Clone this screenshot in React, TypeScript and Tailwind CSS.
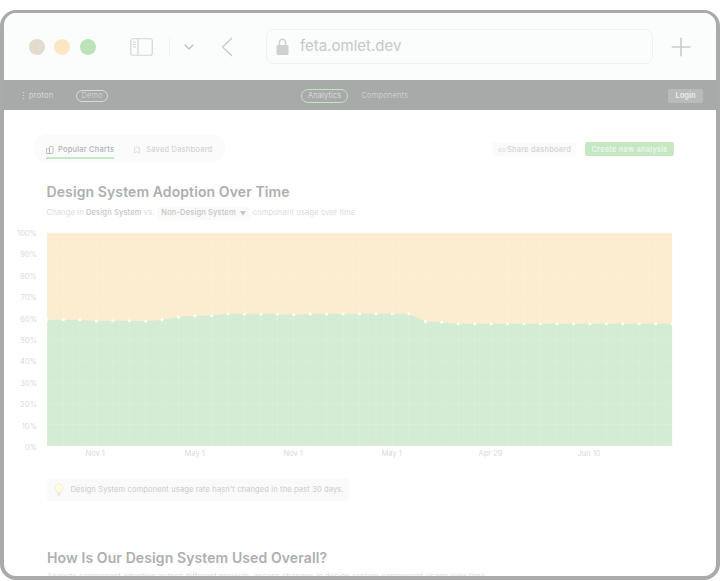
import { Bookmark, ChevronDown, Link2, Plus } from "lucide-react";

const Y_LABELS = ["100%", "90%", "80%", "70%", "60%", "50%", "40%", "30%", "20%", "10%", "0%"];

// y of each data point in chart coords (0..213, top is 100%)
const POINTS = [
  86.7, 86.7, 86.7, 88, 87.7, 87.7, 88.3, 86.7, 84, 82.7, 82.7, 80.7, 81.3, 81, 81, 81.7, 81, 81, 81, 80.7, 80.7, 80.7,
  80.7, 88.3, 89.3, 90.7, 90.7, 90.7, 90.7, 90.7, 90.7, 90.7, 90.7, 90.7, 90.7, 90.7, 90.7, 90.7, 90.7,
];

const STEP = 16.45;

const AdoptionChart = () => {
  const line = POINTS.map((y, i) => `${(i * STEP).toFixed(1)},${y}`).join(" ");
  const width = STEP * 38;
  return (
    <svg width="640" height="213" viewBox="0 0 640 213" className="block overflow-visible">
      <rect x="0" y="0" width={width} height="213" fill="#fcedd0" />
      <polygon points={`0,213 ${line} ${width},213`} fill="#d4ecd3" />
      {POINTS.map((_, i) => (
        <line key={i} x1={i * STEP} x2={i * STEP} y1="0" y2="213" stroke="#ffffff" strokeOpacity="0.14" />
      ))}
      {Y_LABELS.map((_, i) => (
        <line key={i} x1="0" x2={width} y1={i * 21.3} y2={i * 21.3} stroke="#ffffff" strokeOpacity="0.14" />
      ))}
      {POINTS.map((y, i) => (
        <circle key={i} cx={i * STEP} cy={y} r="1.5" fill="#ffffff" />
      ))}
    </svg>
  );
};

const BrowserBar = () => (
  <div className="flex h-[67px] items-center bg-[#fbfcfc] pl-[25px]">
    <span className="h-[16px] w-[16px] rounded-full bg-[#e3dbcc]" />
    <span className="ml-[9px] h-[16px] w-[16px] rounded-full bg-[#fbe7c4]" />
    <span className="ml-[10px] h-[16px] w-[16px] rounded-full bg-[#bde3b9]" />
    <svg width="23" height="18" viewBox="0 0 23 18" fill="none" className="ml-[34px]">
      <rect x="0.75" y="0.75" width="21.5" height="16.5" rx="2" stroke="#d3d5d5" strokeWidth="1.2" />
      <line x1="8" y1="1" x2="8" y2="17" stroke="#d3d5d5" strokeWidth="1.2" />
      <path d="M3 4h3M3 6.5h3M3 9h3" stroke="#d3d5d5" />
    </svg>
    <span className="ml-[16px] h-[20px] w-px bg-[#f1f2f2]" />
    <ChevronDown size={16} strokeWidth={2} className="ml-[11px] text-[#bfc1c1]" />
    <svg width="12" height="20" viewBox="0 0 12 20" fill="none" className="ml-[24px]">
      <path d="M11 1 1.5 10 11 19" stroke="#c9caca" strokeWidth="1.3" />
    </svg>
    <div className="ml-[33px] flex h-[35px] w-[387px] items-center rounded-[8px] border border-[#eff1f0] pl-[9px]">
      <svg width="13" height="17" viewBox="0 0 13 17" fill="none">
        <path d="M3.4 7V4.4a3.1 3.1 0 0 1 6.2 0V7" stroke="#cfd1d1" strokeWidth="1.4" />
        <rect x="0.5" y="7" width="12" height="10" rx="1.5" fill="#cfd1d1" />
      </svg>
      <span className="ml-[11px] text-[15px] text-[#c6c8c8]">feta.omlet.dev</span>
    </div>
    <Plus size={30} strokeWidth={1.3} className="ml-[13px] text-[#c9cbcb]" />
  </div>
);

const AppNav = () => (
  <div className="flex h-[30px] items-center bg-[#a8a9a9] pt-[2px] text-[7.5px] font-light text-[#e4e6e6]">
    <span className="ml-[15px] w-[10px] text-[9px]">⋮</span>
    <span className="tracking-[0.3px]">proton</span>
    <span className="ml-[23px] rounded-full border border-[#d9dbdb] px-[4px] leading-[10px] tracking-[0.2px] text-[#d9dbdb]">
      Demo
    </span>
    <span className="ml-[193px] rounded-full border border-[#c3e6c0] px-[6px] py-[1px] leading-[10px] tracking-[0.2px]">
      Analytics
    </span>
    <span className="ml-[13px] tracking-[0.2px] text-[#d8dada]">Components</span>
    <span className="ml-auto mr-[13px] flex h-[14px] w-[35px] items-center justify-center rounded-[2px] bg-[#b9baba] font-semibold text-[#eceeee]">
      Login
    </span>
  </div>
);

const Toolbar = () => (
  <div className="flex items-center pl-[29px] pr-[42px]">
    <div className="flex h-[29px] w-[192px] items-center rounded-full bg-[#fbfbfb] pl-[13px] pt-[2px] text-[7.5px] font-medium tracking-[0.2px]">
      <div className="relative flex items-center gap-[4px] text-[#b0b2b2]">
        <svg width="8" height="8" viewBox="0 0 8 8" fill="none" stroke="#b0b2b2" strokeWidth="0.8">
          <rect x="0.5" y="3" width="3" height="4.5" />
          <rect x="3.5" y="0.5" width="3.5" height="7" rx="0.6" />
        </svg>
        <span>Popular Charts</span>
        <span className="absolute -bottom-[4px] left-0 h-[2px] w-full bg-[#c5e7c3]" />
      </div>
      <div className="ml-[19px] flex items-center gap-[5px] text-[#d2d4d4]">
        <Bookmark size={8} />
        <span>Saved Dashboard</span>
      </div>
    </div>
    <div className="ml-auto flex h-[14px] w-[83px] items-center justify-center gap-[1px] rounded-[2px] bg-[#fafafa] pt-[2px] text-[7.5px] font-medium tracking-[0.2px] text-[#d2d4d4]">
      <Link2 size={8} />
      <span>Share dashboard</span>
    </div>
    <div className="ml-[9px] flex h-[14px] w-[89px] items-center justify-center rounded-[2px] bg-[#c5e8c3] pt-[2px] text-[7.5px] font-medium tracking-[0.2px] text-[#eef8ee]">
      Create new analysis
    </div>
  </div>
);

const App = () => {
  return (
    <div className="h-[581px] w-[720px] bg-white pt-[10px] font-['Inter',sans-serif]">
      <div className="h-[570px] overflow-hidden rounded-[16px] border-[4px] border-t-[3px] border-[#a9aaab] bg-white">
        <BrowserBar />
        <AppNav />
        <div className="pt-[24px]">
          <Toolbar />
          <div className="pl-[42.5px]">
            <h1 className="mt-[20px] text-[14px] font-semibold leading-[18px] tracking-[0.1px] text-[#adafaf]">
              Design System Adoption Over Time
            </h1>
            <p className="mt-[5px] flex h-[14px] items-center text-[7.5px] tracking-[0.15px] text-[#d8dada]">
              Change in&nbsp;<b className="font-medium text-[#c3c5c5]">Design System</b>&nbsp;vs.
              <span className="mx-[2px] ml-[2px] flex h-[13px] w-[94px] items-center justify-center gap-[4px] rounded-[2px] bg-[#fafafa] font-medium text-[#c3c5c5]">
                Non-Design System <span className="text-[6px]">▼</span>
              </span>
              component usage over time
            </p>
          </div>
          <div className="relative mt-[13px] pl-[42.5px]">
            <div className="absolute left-0 top-[-4px] flex h-[224px] w-[33px] flex-col justify-between text-right text-[7.5px] leading-[10px] text-[#d8dada]">
              {Y_LABELS.map((label) => (
                <span key={label}>{label}</span>
              ))}
            </div>
            <AdoptionChart />
            <div className="relative mt-[3px] h-[10px] text-[7.5px] leading-[10px] text-[#d8dada]">
              <span className="absolute left-[39px]">Nov 1</span>
              <span className="absolute left-[138px]">May 1</span>
              <span className="absolute left-[237px]">Nov 1</span>
              <span className="absolute left-[335px]">May 1</span>
              <span className="absolute left-[432px]">Apr 29</span>
              <span className="absolute left-[531px]">Jun 10</span>
            </div>
          </div>
          <div className="ml-[42.5px] mt-[19px] flex h-[23px] w-[302px] items-center rounded-[2px] bg-[#fafafa] pl-[7px] text-[7.5px] tracking-[0.14px] text-[#c8caca]">
            <svg width="10" height="13" viewBox="0 0 10 13" fill="none" className="shrink-0">
              <path d="M5 .8a4 4 0 0 0-2.4 7.2c.5.5.7 1 .7 1.6h3.4c0-.6.2-1.1.7-1.6A4 4 0 0 0 5 .8Z" fill="#fefbe9" stroke="#f3e9bb" strokeWidth="0.8" />
              <path d="M3.6 10.8h2.8M4 12.2h2" stroke="#d8dada" />
            </svg>
            <span className="ml-[7px] whitespace-nowrap">Design System component usage rate hasn't changed in the past 30 days.</span>
          </div>
          <div className="pl-[43px]">
            <h2 className="mt-[48px] text-[14px] font-semibold leading-[18px] tracking-[0.1px] text-[#adafaf]">
              How Is Our Design System Used Overall?
            </h2>
            <p className="mt-[4px] whitespace-nowrap text-[7.5px] tracking-[0.2px] text-[#d8dada]">
              Analyze component adoption across different projects, assess changes in design system component usage over time
            </p>
          </div>
        </div>
      </div>
    </div>
  );
};

export default App;
